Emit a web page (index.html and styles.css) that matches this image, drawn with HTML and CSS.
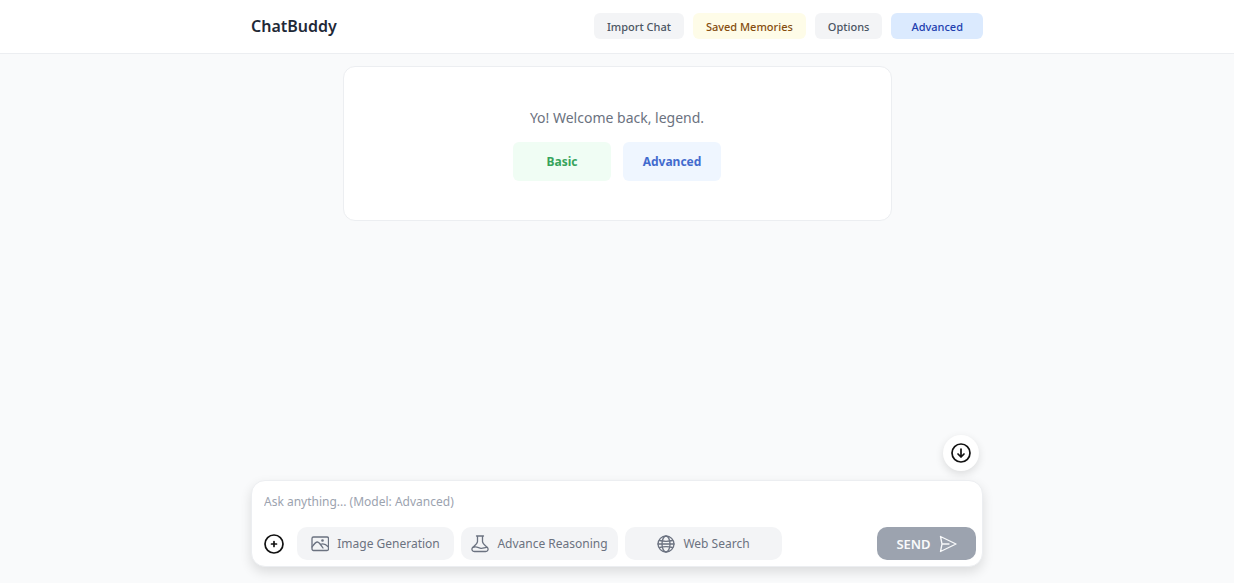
FILE: index.html
```html
<!DOCTYPE html>
<html lang="en">
<head>
<meta charset="utf-8">
<meta name="viewport" content="width=device-width, initial-scale=1">
<title>ChatBuddy</title>
<link rel="stylesheet" href="styles.css">
</head>
<body>
<header class="header">
  <div class="container header-row">
    <h1 class="brand">ChatBuddy</h1>
    <nav class="nav">
      <button class="nav-button" type="button">Import Chat</button>
      <button class="nav-button memories" type="button">Saved Memories</button>
      <button class="nav-button" type="button">Options</button>
      <button class="nav-button mode" type="button">Advanced</button>
    </nav>
  </div>
</header>
<main class="container chat">
  <section class="welcome">
    <p class="greeting">Yo! Welcome back, legend.</p>
    <div class="choices">
      <button class="choice basic" type="button">Basic</button>
      <button class="choice advanced" type="button">Advanced</button>
    </div>
  </section>
</main>
<footer class="container dock">
  <button class="scroll-down" type="button" aria-label="Scroll to bottom">
    <svg class="icon-round" viewBox="0 0 20 20"><circle cx="10" cy="10" r="9"/><path d="M10 6v8M7 11l3 3 3-3"/></svg>
  </button>
  <form class="composer">
    <input class="prompt" type="text" placeholder="Ask anything... (Model: Advanced)" aria-label="Message">
    <div class="toolbar">
      <button class="attach" type="button" aria-label="Add attachment">
        <svg class="icon-round" viewBox="0 0 20 20"><circle cx="10" cy="10" r="9"/><path d="M10 7.500v5M7.500 10h5"/></svg>
      </button>
      <button class="tool" type="button">
        <svg class="icon" viewBox="0 0 18 18"><rect x="1" y="2" width="16.500" height="13.500" rx="1.500"/><path d="M1 12C3 9 5 7 6.500 7S10 10 12 13M9.500 9.500C12 8 14.500 9 17.500 12"/><circle cx="11.500" cy="5.500" r=".7"/></svg>
        Image Generation
      </button>
      <button class="tool" type="button">
        <svg class="icon" viewBox="0 0 18 18"><path d="M5.500 1h7M6.500 1v5.500C6.500 9 3.500 10.500 1.500 12.500.3 14.500 1.200 16.500 3.500 16.500h11c2.300 0 3.200-2 2-4-2-2-5-3.500-5-6V1M2 12.500c3-2 5.500.500 8 .8 2.500.3 4-1.300 6.500-.8"/></svg>
        Advance Reasoning
      </button>
      <button class="tool" type="button">
        <svg class="icon" viewBox="0 0 18 18"><circle cx="9" cy="9" r="8"/><ellipse cx="9" cy="9" rx="4" ry="8"/><path d="M2.500 5.500c4 1 9 1 13 0M2.500 12.500c4-1 9-1 13 0M1 9h16"/></svg>
        Web Search
      </button>
      <button class="send" type="submit">SEND
        <svg class="icon" viewBox="0 0 18 18"><path d="M1.500 1.500L17 9 1.500 16.500 3 9zM3 9H10"/></svg>
      </button>
    </div>
  </form>
</footer>
</body>
</html>
```
FILE: styles.css
```css
* { box-sizing: border-box; }

body {
  margin: 0;
  min-height: 100vh;
  display: flex;
  flex-direction: column;
  background: #f9fafb;
  color: #1f2937;
  font-family: "Segoe UI", "Noto Sans", sans-serif;
}

button {
  border: 0;
  padding: 0;
  font: inherit;
  cursor: pointer;
}

svg {
  fill: none;
  stroke: currentColor;
  stroke-linecap: round;
  stroke-linejoin: round;
}

.container {
  width: 100%;
  max-width: 732px;
  margin: 0 auto;
}

.header {
  background: #fff;
  border-bottom: 1px solid #eceef1;
}

.header-row {
  display: flex;
  align-items: center;
  justify-content: space-between;
  padding: 13px 0 14px;
}

.brand {
  margin: 0;
  font-size: 16px;
  font-weight: 600;
  line-height: 26px;
}

.nav { display: flex; gap: 9px; }

.nav-button {
  padding: 1px 13px 0;
  border-radius: 6px;
  background: #f3f4f6;
  color: #4b5563;
  font-size: 11px;
  font-weight: 500;
  line-height: 25px;
}

.memories { background: #fefce8; color: #854d0e; }
.mode { padding: 1px 20px 0; background: #dbeafe; color: #1e40af; }

.chat { flex: 1; padding-top: 12px; }

.welcome {
  width: 75%;
  margin: 0 auto;
  padding: 39px 16px;
  background: #fff;
  border: 1px solid #eceef1;
  border-radius: 12px;
  text-align: center;
}

.greeting {
  margin: 0 0 12px;
  color: #6b7280;
  font-size: 14px;
  line-height: 24px;
}

.choices { display: flex; justify-content: center; gap: 12px; }

.choice {
  width: 98px;
  border-radius: 6px;
  font-size: 12px;
  font-weight: 700;
  line-height: 39px;
}

.basic { background: #f0fdf4; color: #37a45c; }
.advanced { background: #eff6ff; color: #426bce; }

.dock {
  display: flex;
  flex-direction: column;
  padding-bottom: 16px;
}

.scroll-down {
  display: grid;
  place-items: center;
  align-self: flex-end;
  width: 36px;
  height: 36px;
  margin: 0 4px 9px 0;
  border-radius: 50%;
  background: #fff;
  color: #111;
  box-shadow: 0 3px 8px rgb(0 0 0 / 12%);
}

.icon-round { width: 20px; height: 20px; stroke-width: 1.7; }

.composer {
  padding: 9px 6px 6px 12px;
  border: 1px solid #eceef1;
  border-radius: 14px;
  background: #fff;
  box-shadow: 0 5px 12px rgb(0 0 0 / 12%);
}

.prompt {
  display: block;
  width: 100%;
  height: 22px;
  margin-bottom: 15px;
  padding: 0;
  border: 0;
  outline: 0;
  background: transparent;
  color: #1f2937;
  font: 12px "Segoe UI", "Noto Sans", sans-serif;
}

.prompt::placeholder { color: #9ca3af; opacity: 1; }

.toolbar { display: flex; align-items: center; gap: 7px; }

.attach {
  display: flex;
  margin-right: 6px;
  background: transparent;
  color: #111;
}

.tool, .send {
  display: flex;
  align-items: center;
  justify-content: center;
  height: 33px;
  border-radius: 10px;
  white-space: nowrap;
}

.tool {
  gap: 8px;
  width: 157px;
  background: #f3f4f6;
  color: #6b7280;
  font-size: 12px;
}

.icon { width: 18px; height: 18px; stroke-width: 1.3; flex: none; }

.send {
  gap: 8px;
  width: 99px;
  margin-left: auto;
  background: #9ca3af;
  color: #f9fafb;
  font-size: 13px;
  font-weight: 600;
}
```
